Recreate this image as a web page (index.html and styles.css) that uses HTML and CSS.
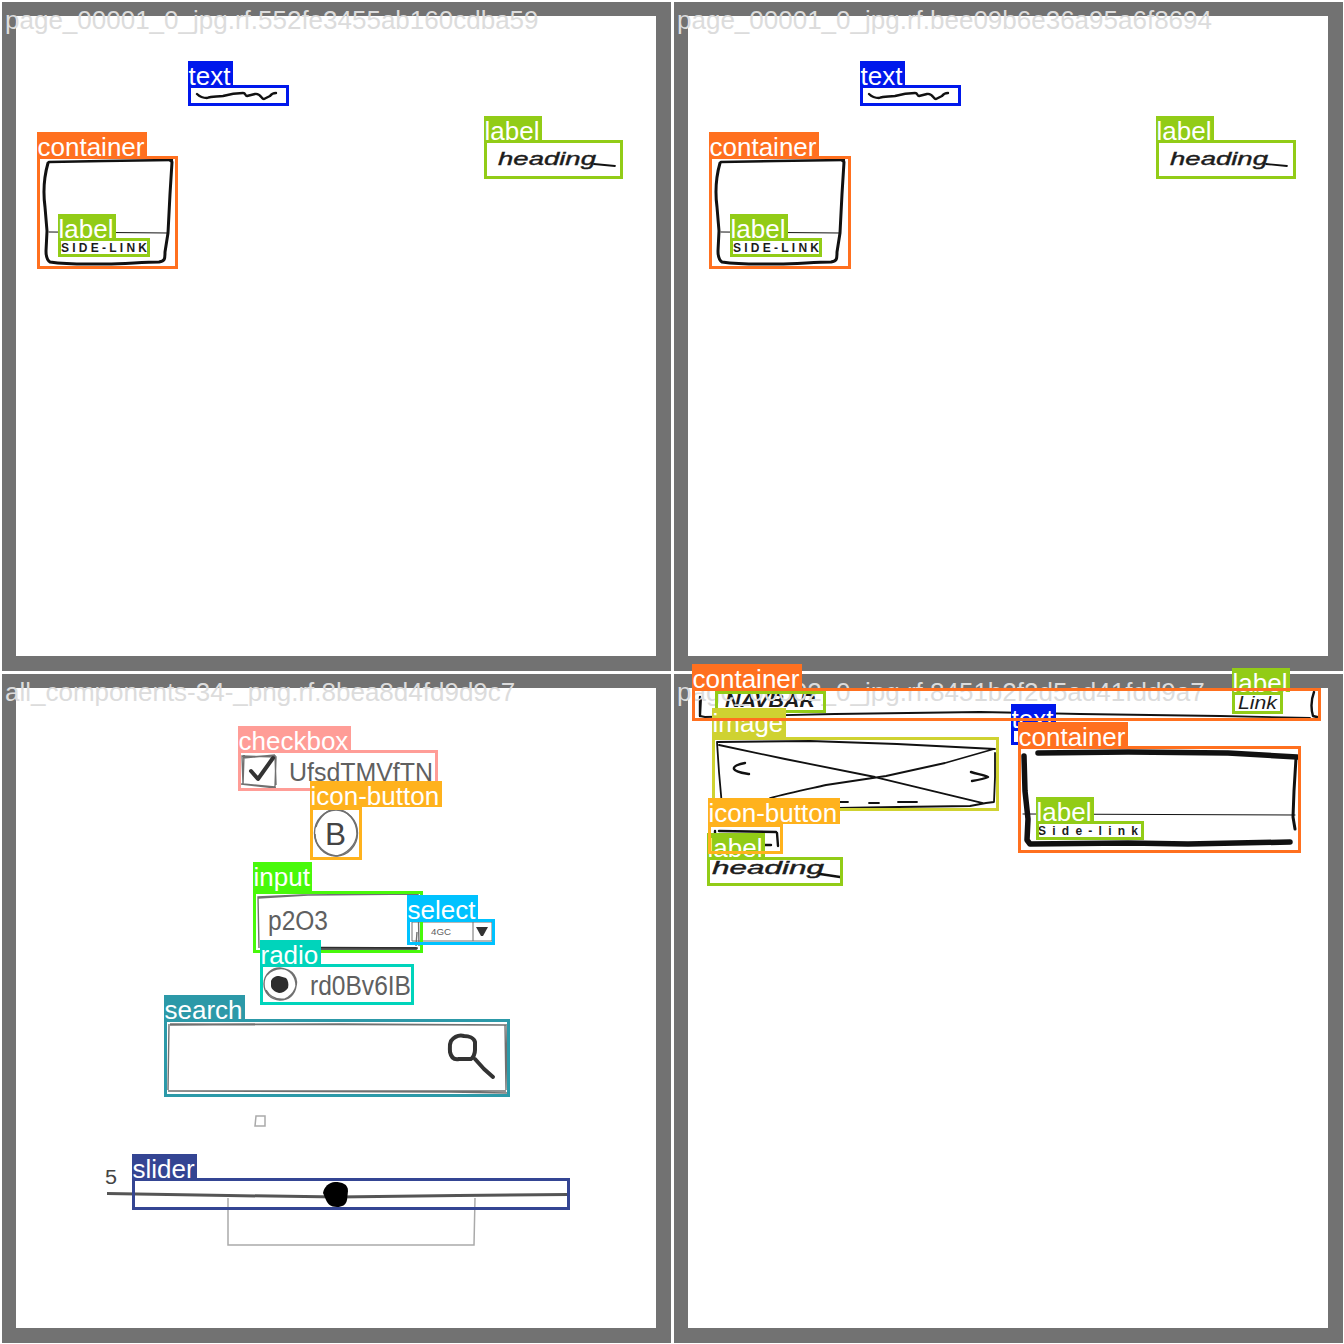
FILE: index.html
```html
<!DOCTYPE html>
<html lang="en">
<head>
<meta charset="utf-8">
<title>Annotation mosaic</title>
<link rel="stylesheet" href="styles.css">
</head>
<body>
<main class="mosaic">

  <section class="tile">
    <svg class="sketch" viewBox="0 0 672 672">
      <defs>
        <g id="page-one">
          <path class="ink w3" d="M197 94c3 3 7 4 10 4 5-2 10-1 16-2 7-2 15-3 20-3 3 0 2 3 4 3l8-2c6-1 6 5 9 5l6-3c2-3 4-3 6-3"/>
          <path class="ink w3" d="M49 162l55-1 68-1"/>
          <path class="ink w4" d="M48 163c-4 14-5 29-3 44l2 24-1 20c0 6 1 9 4 11 20 3 37 2 56 2 19 0 36-2 53-2 6-1 6-3 6-10l3-19 2-39 2-32-2-2"/>
          <path class="ink w1" d="M49 232l119 1"/>
        </g>
      </defs>
      <use href="#page-one"/>
      <text class="hand caps" x="61" y="252" textLength="86" lengthAdjust="spacing">SIDE-LINK</text>
      <text class="hand script" x="498" y="165" textLength="98" lengthAdjust="spacingAndGlyphs">heading</text>
      <path class="ink w2" d="M594 164l21 2"/>
    </svg>
    <h2 class="name">page_00001_0_jpg.rf.552fe3455ab160cdba59</h2>
    <div class="box text p1-text"><span class="tag">text</span></div>
    <div class="box container p1-container"><span class="tag">container</span></div>
    <div class="box label p1-side"><span class="tag">label</span></div>
    <div class="box label p1-heading"><span class="tag">label</span></div>
  </section>

  <section class="tile">
    <svg class="sketch" viewBox="0 0 672 672">
      <use href="#page-one"/>
      <text class="hand caps" x="61" y="252" textLength="86" lengthAdjust="spacing">SIDE-LINK</text>
      <text class="hand script" x="498" y="165" textLength="98" lengthAdjust="spacingAndGlyphs">heading</text>
      <path class="ink w2" d="M594 164l21 2"/>
    </svg>
    <h2 class="name">page_00001_0_jpg.rf.bee09b6e36a95a6f8694</h2>
    <div class="box text p1-text"><span class="tag">text</span></div>
    <div class="box container p1-container wide"><span class="tag">container</span></div>
    <div class="box label p1-side"><span class="tag">label</span></div>
    <div class="box label p1-heading wide"><span class="tag">label</span></div>
  </section>

  <section class="tile">
    <svg class="sketch" viewBox="0 672 672 672">
      <path class="pencil" d="M242 756l34 1-1 30-32-3zM244 755l-1 30M241 784l35 4M275 755l1 30M243 758l32-3"/>
      <path class="ink w4 soft" d="M251 771l7 8 15-21"/>
      <text class="print" x="289" y="781" font-size="25" textLength="144" lengthAdjust="spacingAndGlyphs">UfsdTMVfTN</text>
      <ellipse class="pencil" cx="336" cy="833" rx="21.500" ry="23"/>
      <path class="pencil" d="M316 827c3-10 12-18 20-18 12 1 21 12 21 25-1 12-11 20-20 22-12-1-22-10-22-22"/>
      <text class="print dark" x="325" y="845" font-size="32" textLength="21" lengthAdjust="spacingAndGlyphs">B</text>
      <path class="pencil" d="M259 948l-1-51 44-2 116-1 1 52M260 947l158 1M258 898l50-3 110-1M417 932l-1 14"/>
      <path class="ink w4" stroke-opacity="0.700" d="M321 948.500l95 0"/>
      <text class="print" x="268" y="930" font-size="27" textLength="60" lengthAdjust="spacingAndGlyphs">p2O3</text>
      <path class="pencil thin" d="M412 922h80v19h-80zM473 922v19"/>
      <text class="print" x="431" y="935" font-size="9" textLength="20" lengthAdjust="spacingAndGlyphs">4GC</text>
      <path d="M476 927l12 0-5 9h-2z" fill="#333"/>
      <path class="pencil" d="M264 984c0-10 8-16 16-16 11 1 16 9 16 18-1 9-8 14-16 14-9 0-16-7-16-16zM267 975c7-8 21-9 27 0 6 9 0 20-9 24-8 1-15-2-19-9"/>
      <path d="M271 981c1-3 4-5 8-5l7 2c2 2 3 6 2 10-2 3-6 5-9 5-4-1-8-4-8-7z" fill="#2e2e2e"/>
      <text class="print" x="310" y="995" font-size="27" textLength="101" lengthAdjust="spacingAndGlyphs">rd0Bv6IB</text>
      <path class="pencil" d="M170 1024l337 1M170 1025l170-1 165 1 1 65M169 1024l-1 66M168 1091h338M170 1091l280 1 57 1M507 1026l-1 62"/>
      <path class="ink w4 soft" d="M451 1041c4-5 9-6 13-5 5 0 10 2 11 6l0 8c0 4-2 8-4 9l-12 0c-5 1-8-2-9-7 0-4-1-7 1-11zM475 1059l9 10 9 8"/>
      <path class="pencil faint" d="M256 1116h9v10h-10z"/>
      <text class="print dark" x="105" y="1184" font-size="20" textLength="12" lengthAdjust="spacingAndGlyphs">5</text>
      <path class="pencil faint" d="M228 1198v47h246l1-47"/>
      <path d="M107 1193.500l121 2 110 1.500 120-1.500 110-1" fill="none" stroke="#555" stroke-width="3"/>
      <path d="M323 1193c1-6 6-11 12-11 7 0 13 2 13 9l-1 9c-1 5-5 7-10 7-7 0-9-3-11-7z" fill="#000"/>
    </svg>
    <h2 class="name">all_components-34-_png.rf.8bea8d4fd9d9c7</h2>
    <div class="box checkbox p3-checkbox"><span class="tag">checkbox</span></div>
    <div class="box icon-button p3-icon"><span class="tag">icon-button</span></div>
    <div class="box input p3-input"><span class="tag">input</span></div>
    <div class="box select p3-select"><span class="tag">select</span></div>
    <div class="box radio p3-radio"><span class="tag">radio</span></div>
    <div class="box search p3-search"><span class="tag">search</span></div>
    <div class="box slider p3-slider"><span class="tag">slider</span></div>
  </section>

  <section class="tile">
    <svg class="sketch" viewBox="672 672 672 672">
      <path class="ink w2" d="M701 700l-1 16 5 1 130-3 145-2 100 2 140 2 90 2"/>
      <path class="ink w3" d="M1314 692c-3 8-3 17-1 24l4 1M700 697v19"/>
      <text class="hand nav" x="725" y="707" textLength="90" lengthAdjust="spacingAndGlyphs">NAVBAR</text>
      <text class="hand link" x="1238" y="709" textLength="39" lengthAdjust="spacingAndGlyphs">Link</text>
      <path class="ink w2" d="M717 742l93-1 87 3 98 5M717 742l2 30 3 34M719 745l66 14 90 18 108 26M770 798c18-5 38-9 56-13l60-9 59-13 49-14M995 753v24l-1 25-8 1-16 3-72 1-60 1M839 802h9M869 803h10M898 802h19"/>
      <path class="ink w3" d="M745 763c-6 1-12 3-11 6s9 4 15 5M971 772c6 2 13 3 17 5-4 2-10 3-16 4"/>
      <path class="ink w3" d="M719 831l57 1"/>
      <path class="ink w3" d="M715 831v10M777 833l1 13M765 845h6"/>
      <text class="hand script heading-two" x="712" y="874" textLength="112" lengthAdjust="spacingAndGlyphs">heading</text>
      <path class="ink w3" d="M820 874l20 3"/>
      <path class="ink w5" d="M1038 753l90-1 100 1 69 4M1024 756l1 35 3 28-1 21 3 4 98-1 60 1 102-2"/>
      <path class="ink w4" d="M1296 758l-2 33-1 26 2 12"/>
      <path class="ink w1" d="M1023 814l272 1"/>
      <text class="hand caps" x="1038" y="835" textLength="100" lengthAdjust="spacing">Side-link</text>
    </svg>
    <h2 class="name">page_00002_0_jpg.rf.8451b2f2d5ad41fdd9a7</h2>
    <div class="box label p4-navbar"></div>
    <div class="box label p4-link"><span class="tag">label</span></div>
    <div class="box text p4-text"><span class="tag">text</span></div>
    <div class="box image p4-image"><span class="tag">image</span></div>
    <div class="box label p4-heading"><span class="tag">label</span></div>
    <div class="box icon-button p4-icon"><span class="tag">icon-button</span></div>
    <div class="box container p4-card"><span class="tag">container</span></div>
    <div class="box label p4-side"><span class="tag">label</span></div>
    <div class="box container p4-nav"><span class="tag">container</span></div>
  </section>

</main>
</body>
</html>
```
FILE: styles.css
```css
* {
  box-sizing: border-box;
}

body {
  margin: 0;
  background: #fff;
  font-family: "Liberation Sans", Arial, sans-serif;
}

.mosaic {
  display: grid;
  grid-template-columns: 672px 672px;
  grid-template-rows: 672px 672px;
  width: 1344px;
  height: 1344px;
  overflow: hidden;
}

/* One picture: a thin white edge, a grey margin and the white page. */
.tile {
  position: relative;
  background:
    linear-gradient(#fff, #fff) 16px 16px / 640px 640px no-repeat,
    linear-gradient(#727272, #727272) 2px 2px / 669px 669px no-repeat,
    #fff;
}

.sketch {
  display: block;
  width: 672px;
  height: 672px;
}

.name {
  position: absolute;
  left: 5px;
  top: 6px;
  margin: 0;
  font-size: 26px;
  font-weight: 400;
  line-height: 28px;
  color: #dcdcdc;
  white-space: nowrap;
}

/* Pen strokes and lettering */
.ink {
  fill: none;
  stroke: #111;
  stroke-linecap: round;
  stroke-linejoin: round;
}

.w1 { stroke-width: 1; }
.w2 { stroke-width: 1.8; }
.w3 { stroke-width: 2.4; }
.w4 { stroke-width: 3; }
.w5 { stroke-width: 5.5; }
.soft { stroke: #333; stroke-width: 4; }

.pencil {
  fill: none;
  stroke: #707070;
  stroke-width: 1.4;
}

.thin { stroke-width: 1; }
.faint { stroke: #aaa; stroke-width: 1.5; }

.print { fill: #606060; }
.dark { fill: #444; }

.hand {
  fill: #1c1c1c;
  font-style: italic;
}

.caps { font-size: 12px; font-weight: 700; font-style: normal; }
.nav { font-size: 18px; font-weight: 700; }
.link { font-size: 18px; }
.script { font-size: 19px; stroke: #1c1c1c; stroke-width: 0.4; }
.heading-two { font-size: 18px; }

/* Detection boxes */
.box {
  position: absolute;
  border: 3px solid var(--tone);
}

.tag {
  position: absolute;
  left: -3px;
  top: -27px;
  height: 24px;
  padding: 0 2.5px 0 0.5px;
  background: var(--tone);
  color: #fff;
  font-size: 26px;
  line-height: 31px;
  white-space: nowrap;
}

.input .tag,
.image .tag {
  top: -32px;
  height: 29px;
}

.icon-button .tag {
  top: -29px;
  height: 26px;
}

.checkbox { --tone: #ff9d97; }
.container { --tone: #ff701f; }
.icon-button { --tone: #ffb21d; }
.image { --tone: #cfd231; }
.input { --tone: #48f90a; }
.label { --tone: #92cc17; }
.radio { --tone: #00d4bb; }
.search { --tone: #2c99a8; }
.select { --tone: #00c2ff; }
.slider { --tone: #344593; }
.text { --tone: #0018ec; }

.p1-text { left: 188px; top: 85px; width: 101px; height: 21px; }
.p1-container { left: 37px; top: 156px; width: 141px; height: 113px; }
.p1-container.wide { width: 142px; }
.p1-side { left: 58px; top: 238px; width: 92px; height: 19px; }
.p1-heading { left: 484px; top: 140px; width: 139px; height: 39px; }
.p1-heading.wide { width: 140px; }

.p3-checkbox { left: 238px; top: 78px; width: 200px; height: 41px; }
.p3-icon { left: 310px; top: 135px; width: 52px; height: 53px; }
.p3-input { left: 253px; top: 219px; width: 170px; height: 62px; }
.p3-select { left: 407px; top: 247px; width: 88px; height: 26px; }
.p3-radio { left: 260px; top: 292px; width: 154px; height: 41px; }
.p3-search { left: 164px; top: 347px; width: 346px; height: 78px; }
.p3-slider { left: 132px; top: 506px; width: 438px; height: 32px; }

.p4-navbar { left: 43px; top: 19px; width: 111px; height: 22px; }
.p4-link { left: 560px; top: 20px; width: 51px; height: 22px; }
.p4-text { left: 339px; top: 56px; width: 60px; height: 17px; }
.p4-image { left: 40px; top: 65px; width: 287px; height: 74px; }
.p4-heading { left: 35px; top: 185px; width: 136px; height: 29px; }
.p4-icon { left: 36px; top: 152px; width: 75px; height: 30px; }
.p4-card { left: 346px; top: 74px; width: 283px; height: 107px; }
.p4-side { left: 364px; top: 149px; width: 108px; height: 19px; }
.p4-nav { left: 20px; top: 16px; width: 629px; height: 33px; }
```
